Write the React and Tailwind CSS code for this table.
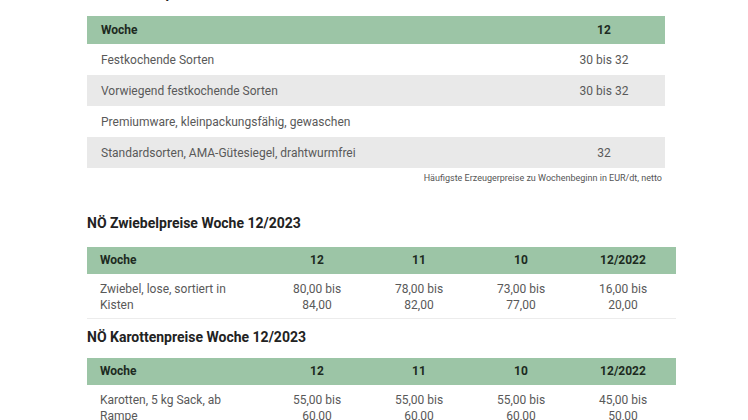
const font = { fontFamily: 'Roboto, "Liberation Sans", sans-serif' }

const kartoffel = [
  ['Festkochende Sorten', '30 bis 32'],
  ['Vorwiegend festkochende Sorten', '30 bis 32'],
  ['Premiumware, kleinpackungsfähig, gewaschen', ''],
  ['Standardsorten, AMA-Gütesiegel, drahtwurmfrei', '32'],
]

const weeks = ['12', '11', '10', '12/2022']

function PriceTable({ label, values }) {
  return (
    <div className="w-[589px]">
      <div className="grid grid-cols-[179px_102px_102px_102px_102px] h-[27px] items-center bg-[#9cc5a6] text-[12px] font-bold text-[#1d2b1f]">
        <div className="pl-[13px]">Woche</div>
        {weeks.map((w) => (
          <div key={w} className="text-center">{w}</div>
        ))}
      </div>
      <div className="grid grid-cols-[179px_102px_102px_102px_102px] pt-[7px] pb-[5px] text-[12px] leading-[16px] text-[#595959] border-b border-[#ececec]">
        <div className="pl-[13px] pr-4">{label}</div>
        {values.map((v, i) => (
          <div key={i} className="text-center px-6">{v}</div>
        ))}
      </div>
    </div>
  )
}

export default function App() {
  return (
    <div className="w-[748px] h-[420px] overflow-hidden bg-white" style={font}>
      <div className="ml-[87px]">
        <h2 className="mt-[-17px] h-[20px] text-[14px] font-bold text-[#222] leading-[20px]">NÖ Kartoffelpreise Woche 12/2023</h2>

        <div className="mt-[13px] w-[578px] text-[12px]">
          <div className="flex h-[28px] items-center bg-[#9cc5a6] font-bold text-[#1d2b1f]">
            <div className="flex-1 pl-[14px]">Woche</div>
            <div className="w-[122px] text-center">12</div>
          </div>
          {kartoffel.map(([name, val], i) => (
            <div key={name} className={`flex h-[31px] items-center text-[#595959] ${i % 2 === 1 ? 'bg-[#e9e9e9]' : 'bg-white'}`}>
              <div className="flex-1 pl-[14px]">{name}</div>
              <div className="w-[122px] text-center">{val}</div>
            </div>
          ))}
          <div className="mt-[4px] text-right pr-[3px] text-[9px] text-[#555]">Häufigste Erzeugerpreise zu Wochenbeginn in EUR/dt, netto</div>
        </div>

        <h2 className="mt-[27px] text-[14px] font-bold text-[#222] leading-[20px]">NÖ Zwiebelpreise Woche 12/2023</h2>
        <div className="mt-[14px]">
          <PriceTable label="Zwiebel, lose, sortiert in Kisten" values={['80,00 bis 84,00', '78,00 bis 82,00', '73,00 bis 77,00', '16,00 bis 20,00']} />
        </div>

        <h2 className="mt-[8px] text-[14px] font-bold text-[#222] leading-[20px]">NÖ Karottenpreise Woche 12/2023</h2>
        <div className="mt-[11px]">
          <PriceTable label="Karotten, 5 kg Sack, ab Rampe" values={['55,00 bis 60,00', '55,00 bis 60,00', '55,00 bis 60,00', '45,00 bis 50,00']} />
        </div>
      </div>
    </div>
  )
}
